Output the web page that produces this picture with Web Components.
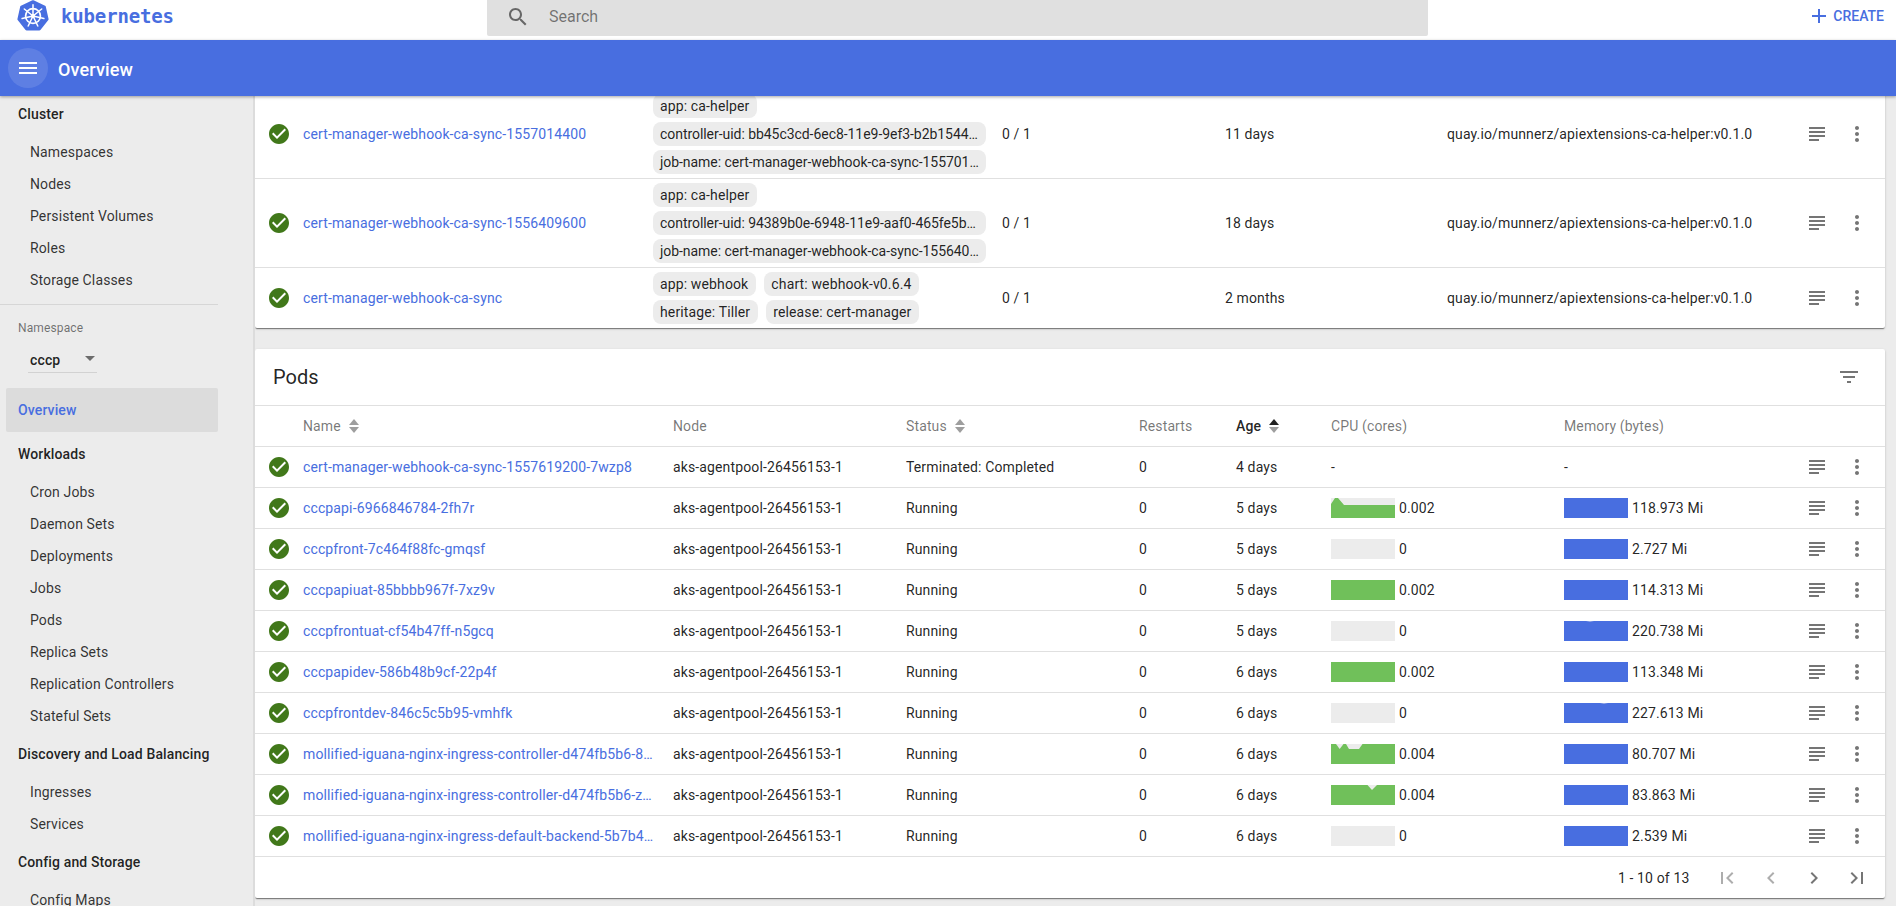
<!DOCTYPE html>
<html lang="en">
<head>
<meta charset="utf-8">
<title>Overview - Kubernetes Dashboard</title>
<style>
html,body{margin:0;padding:0;height:100%;overflow:hidden;background:#ececec;}
body{font-family:Roboto,"Liberation Sans",sans-serif;font-size:14px;letter-spacing:.13px;color:rgba(0,0,0,.87);}
</style>
</head>
<body>
<kd-app>
  <kd-topbar slot="top"></kd-topbar>
  <kd-toolbar slot="bar" title="Overview"></kd-toolbar>
  <kd-sidebar slot="side">
    <kd-nav-head>Cluster</kd-nav-head>
    <kd-nav-item>Namespaces</kd-nav-item>
    <kd-nav-item>Nodes</kd-nav-item>
    <kd-nav-item>Persistent Volumes</kd-nav-item>
    <kd-nav-item>Roles</kd-nav-item>
    <kd-nav-item>Storage Classes</kd-nav-item>
    <kd-namespace value="cccp"></kd-namespace>
    <kd-nav-head active>Overview</kd-nav-head>
    <kd-nav-head>Workloads</kd-nav-head>
    <kd-nav-item>Cron Jobs</kd-nav-item>
    <kd-nav-item>Daemon Sets</kd-nav-item>
    <kd-nav-item>Deployments</kd-nav-item>
    <kd-nav-item>Jobs</kd-nav-item>
    <kd-nav-item>Pods</kd-nav-item>
    <kd-nav-item>Replica Sets</kd-nav-item>
    <kd-nav-item>Replication Controllers</kd-nav-item>
    <kd-nav-item>Stateful Sets</kd-nav-item>
    <kd-nav-head gap>Discovery and Load Balancing</kd-nav-head>
    <kd-nav-item>Ingresses</kd-nav-item>
    <kd-nav-item>Services</kd-nav-item>
    <kd-nav-head gap>Config and Storage</kd-nav-head>
    <kd-nav-item>Config Maps</kd-nav-item>
  </kd-sidebar>
  <kd-main slot="main">
    <kd-card class="jobs">
      <kd-job-row name="cert-manager-webhook-ca-sync-1557014400" pods="0 / 1" age="11 days" image="quay.io/munnerz/apiextensions-ca-helper:v0.1.0"
        labels="app: ca-helper|controller-uid: bb45c3cd-6ec8-11e9-9ef3-b2b1544…|job-name: cert-manager-webhook-ca-sync-155701…"></kd-job-row>
      <kd-job-row name="cert-manager-webhook-ca-sync-1556409600" pods="0 / 1" age="18 days" image="quay.io/munnerz/apiextensions-ca-helper:v0.1.0"
        labels="app: ca-helper|controller-uid: 94389b0e-6948-11e9-aaf0-465fe5b…|job-name: cert-manager-webhook-ca-sync-155640…"></kd-job-row>
      <kd-job-row last name="cert-manager-webhook-ca-sync" pods="0 / 1" age="2 months" image="quay.io/munnerz/apiextensions-ca-helper:v0.1.0"
        labels="app: webhook|chart: webhook-v0.6.4|heritage: Tiller|release: cert-manager"></kd-job-row>
    </kd-card>
    <kd-card class="pods" title="Pods" filter>
      <kd-pod-header></kd-pod-header>
      <kd-pod-row name="cert-manager-webhook-ca-sync-1557619200-7wzp8" status="Terminated: Completed" age="4 days" cpu="-" mem="-"></kd-pod-row>
      <kd-pod-row name="cccpapi-6966846784-2fh7r" status="Running" age="5 days" cpu="0.002" mem="118.973 Mi" spark="peak"></kd-pod-row>
      <kd-pod-row name="cccpfront-7c464f88fc-gmqsf" status="Running" age="5 days" cpu="0" mem="2.727 Mi" spark="none"></kd-pod-row>
      <kd-pod-row name="cccpapiuat-85bbbb967f-7xz9v" status="Running" age="5 days" cpu="0.002" mem="114.313 Mi" spark="full"></kd-pod-row>
      <kd-pod-row name="cccpfrontuat-cf54b47ff-n5gcq" status="Running" age="5 days" cpu="0" mem="220.738 Mi" spark="none" memnotch="26"></kd-pod-row>
      <kd-pod-row name="cccpapidev-586b48b9cf-22p4f" status="Running" age="6 days" cpu="0.002" mem="113.348 Mi" spark="full"></kd-pod-row>
      <kd-pod-row name="cccpfrontdev-846c5c5b95-vmhfk" status="Running" age="6 days" cpu="0" mem="227.613 Mi" spark="none" memnotch="40"></kd-pod-row>
      <kd-pod-row name="mollified-iguana-nginx-ingress-controller-d474fb5b6-8…" status="Running" age="6 days" cpu="0.004" mem="80.707 Mi" spark="notches"></kd-pod-row>
      <kd-pod-row name="mollified-iguana-nginx-ingress-controller-d474fb5b6-z…" status="Running" age="6 days" cpu="0.004" mem="83.863 Mi" spark="notch"></kd-pod-row>
      <kd-pod-row name="mollified-iguana-nginx-ingress-default-backend-5b7b4…" status="Running" age="6 days" cpu="0" mem="2.539 Mi" spark="none"></kd-pod-row>
      <kd-paginator text="1 - 10 of 13"></kd-paginator>
    </kd-card>
  </kd-main>
</kd-app>
<script>
const BLUE='#486ee0';
const ICONS={
  check:'M12 2C6.48 2 2 6.48 2 12s4.48 10 10 10 10-4.48 10-10S17.52 2 12 2zm-2 15l-5-5 1.41-1.41L10 14.17l7.59-7.59L19 8l-9 9z',
  subject:'M14 17H4v2h10v-2zm6-8H4v2h16V9zM4 15h16v-2H4v2zM4 5v2h16V5H4z',
  more:'M12 8c1.1 0 2-.9 2-2s-.9-2-2-2-2 .9-2 2 .9 2 2 2zm0 2c-1.1 0-2 .9-2 2s.9 2 2 2 2-.9 2-2-.9-2-2-2zm0 6c-1.1 0-2 .9-2 2s.9 2 2 2 2-.9 2-2-.9-2-2-2z',
  filter:'M10 18h4v-2h-4v2zM3 6v2h18V6H3zm3 7h12v-2H6v2z',
  search:'M15.5 14h-.79l-.28-.27C15.41 12.59 16 11.11 16 9.5 16 5.91 13.09 3 9.5 3S3 5.91 3 9.5 5.91 16 9.5 16c1.61 0 3.09-.59 4.23-1.57l.27.28v.79l5 4.99L20.49 19l-4.99-5zm-6 0C7.01 14 5 11.99 5 9.5S7.01 5 9.5 5 14 7.01 14 9.5 11.99 14 9.5 14z',
  menu:'M3 18h18v-2H3v2zm0-5h18v-2H3v2zm0-7v2h18V6H3z',
  plus:'M19 13h-6v6h-2v-6H5v-2h6V5h2v6h6v2z',
  first:'M18.41 16.59L13.82 12l4.59-4.59L17 6l-6 6 6 6zM6 6h2v12H6z',
  prev:'M15.41 16.59L10.83 12l4.58-4.59L14 6l-6 6 6 6z',
  next:'M8.59 16.59L13.17 12 8.59 7.41 10 6l6 6-6 6z',
  last:'M5.59 7.41L10.18 12l-4.59 4.59L7 18l6-6-6-6zM16 6h2v12h-2z'
};
function define(name,css,html){
  class C extends HTMLElement{
    connectedCallback(){
      if(this.shadowRoot)return;
      const r=this.attachShadow({mode:'open'});
      r.innerHTML='<style>'+css+'</style>'+(typeof html==='function'?html(this):html);
    }
  }
  customElements.define(name,C);
}
const esc=s=>String(s).replace(/&/g,'&amp;').replace(/</g,'&lt;');

define('kd-icon',
  ':host{display:inline-flex;width:24px;height:24px;flex:none;color:inherit}svg{width:24px;height:24px;display:block;fill:currentColor}',
  h=>`<svg viewBox="0 0 24 24" aria-hidden="true"><path d="${ICONS[h.getAttribute('name')]}"/></svg>`);

define('kd-app',
  `:host{display:grid;grid-template-columns:255px 1fr;grid-template-rows:40px 56px 810px;height:906px;width:1896px;overflow:hidden;background:#ececec}
   ::slotted([slot=top]){grid-column:1/3}::slotted([slot=bar]){grid-column:1/3;position:relative;z-index:3}`,
  `<slot name="top"></slot><slot name="bar"></slot><slot name="side"></slot><slot name="main"></slot>`);

define('kd-topbar',
  `:host{display:flex;align-items:flex-start;height:40px;background:#fff;position:relative}
   .logo{display:flex;align-items:center;width:487px;height:32px;padding-left:17px;box-sizing:border-box;gap:12px}
   .logo svg{width:32px;height:32px;display:block}
   .word{font:700 19px "DejaVu Sans Mono",monospace;color:${BLUE};letter-spacing:-.15px}
   .search{width:941px;height:36px;background:#e0e0e0;border-radius:0 0 2px 2px;display:flex;align-items:center;color:rgba(0,0,0,.54);font-size:16px;padding-left:19px;box-sizing:border-box}
   .search kd-icon{margin-top:-3px}
   .search span{margin:-3px 0 0 19px;color:rgba(0,0,0,.5);letter-spacing:0}
   .create{margin-left:auto;display:flex;align-items:center;height:32px;color:${BLUE};font-weight:500;font-size:14px;padding-right:12px;letter-spacing:0}
   .create span{margin-left:2px}`,
  `<div class="logo"><svg viewBox="0 0 32 32" aria-hidden="true">
      <polygon points="16,1.5 27.5,6.9 30.3,19.2 22.4,29.2 9.6,29.2 1.7,19.2 4.5,6.9" fill="${BLUE}" stroke="${BLUE}" stroke-width="2.6" stroke-linejoin="round"/>
      <circle cx="16" cy="16" r="7.4" fill="none" stroke="#fff" stroke-width="1.7"/>
      <path d="M16 16V4.8M16 16L24.7 9M16 16L26.9 18.5M16 16L20.8 26M16 16L11.2 26M16 16L5.1 18.5M16 16L7.3 9" stroke="#fff" stroke-width="1.5" stroke-linecap="round"/>
      <circle cx="16" cy="16" r="2" fill="#fff"/></svg>
      <span class="word">kubernetes</span></div>
   <div class="search"><kd-icon name="search"></kd-icon><span>Search</span></div>
   <div class="create"><kd-icon name="plus"></kd-icon><span>CREATE</span></div>`);

define('kd-toolbar',
  `:host{display:flex;align-items:center;height:56px;background:${BLUE};color:#fff;box-shadow:0 1px 3px rgba(0,0,0,.35);padding-left:8px;box-sizing:border-box}
   .m{width:40px;height:40px;border-radius:50%;background:rgba(255,255,255,.12);display:flex;align-items:center;justify-content:center}
   .t{margin:2px 0 0 10px;font-size:18px;font-weight:500}`,
  h=>`<div class="m"><kd-icon name="menu"></kd-icon></div><div class="t">${esc(h.getAttribute('title'))}</div>`);

define('kd-sidebar',
  `:host{display:flex;flex-direction:column;width:255px;height:810px;overflow:hidden;background:#ececec;box-sizing:border-box;border-right:2px solid #dcdcdc}`,
  `<slot></slot>`);

define('kd-nav-head',
  `:host{display:flex;flex:none;align-items:center;height:36px;margin:0 36px 4px 0;padding-left:18px;font-weight:500;font-size:14px;width:200px;white-space:nowrap}
   :host([gap]){margin-top:4px}
   :host([active]){height:44px;margin:0 35px 4px 6px;padding-left:12px;width:200px;background:#dcdcdc;border-radius:2px;color:${BLUE}}`,
  `<slot></slot>`);

define('kd-nav-item',
  `:host{display:flex;flex:none;align-items:center;height:32px;padding-left:30px;font-size:14px;white-space:nowrap;color:rgba(0,0,0,.8)}`,
  `<slot></slot>`);

define('kd-namespace',
  `:host{display:block;flex:none;height:84px;margin-top:8px;width:218px;border-top:1px solid #d6d6d6;box-sizing:border-box}
   .l{font-size:12px;color:rgba(0,0,0,.54);margin:16px 0 0 18px;line-height:14px}
   .s{width:69px;margin:12px 0 0 28px;height:26px;border-bottom:1px solid #d2d2d2;display:flex;align-items:center;justify-content:space-between;padding:0 2px;box-sizing:border-box;font-weight:500;font-size:14px}
   .a{width:0;height:0;border:5px solid transparent;border-top-color:rgba(0,0,0,.54);border-bottom:0;margin-top:-3px}`,
  h=>`<div class="l">Namespace</div><div class="s"><span>${esc(h.getAttribute('value'))}</span><span class="a"></span></div>`);

define('kd-main',
  `:host{display:flex;flex-direction:column;gap:21px;height:810px;overflow:hidden;padding-right:11px;box-sizing:border-box}
   ::slotted(.jobs){margin-top:-6px}`,
  `<slot></slot>`);

define('kd-card',
  `:host{display:block;flex:none;background:#fff;border-radius:2px;box-shadow:0 2px 1px -1px rgba(0,0,0,.3),0 1px 1px 0 rgba(0,0,0,.2),0 1px 3px 0 rgba(0,0,0,.14)}
   .h{display:flex;align-items:center;justify-content:space-between;height:56px;padding:0 24px 0 18px;border-bottom:1px solid #e0e0e0;font-size:20px;letter-spacing:0}
   kd-icon{color:rgba(0,0,0,.54)}`,
  h=>(h.getAttribute('title')?`<div class="h"><span>${esc(h.getAttribute('title'))}</span>${h.hasAttribute('filter')?'<kd-icon name="filter"></kd-icon>':''}</div>`:'')+`<slot></slot>`);

define('kd-chip',
  `:host{display:inline-block;height:24px;line-height:24px;padding:0 8px 0 7px;box-sizing:border-box;background:#ececec;border-radius:8px;font-size:14px;white-space:nowrap;color:rgba(0,0,0,.87)}
   :host([long]){width:333px;letter-spacing:-.05px;overflow:hidden}`,
  `<slot></slot>`);

const rowActions=`<span class="a"><kd-icon name="subject"></kd-icon></span><span class="a"><kd-icon name="more"></kd-icon></span>`;
const rowBase=`:host{display:grid;align-items:center;box-sizing:border-box;font-size:14px;border-bottom:1px solid #e0e0e0;white-space:nowrap}
  .st{display:flex;justify-content:flex-start;padding-left:12px;color:#41781a}
  .lnk{color:${BLUE}}
  .a{display:flex;justify-content:center;color:rgba(0,0,0,.54)}`;

define('kd-job-row',
  rowBase+`:host{grid-template-columns:48px 350px 349px 223px 222px 350px 40px 40px 8px;padding:4px 0}
   :host([last]){border-bottom:0}
   .c{display:flex;flex-wrap:wrap;gap:4px 8px;width:340px}`,
  h=>`<span class="st"><kd-icon name="check"></kd-icon></span><span class="lnk">${esc(h.getAttribute('name'))}</span>
   <span class="c">${h.getAttribute('labels').split('|').map(l=>`<kd-chip${l.endsWith('…')?' long':''}>${esc(l)}</kd-chip>`).join('')}</span>
   <span>${esc(h.getAttribute('pods'))}</span><span>${esc(h.getAttribute('age'))}</span><span>${esc(h.getAttribute('image'))}</span>${rowActions}<span></span>`);

const podCols='grid-template-columns:48px 370px 233px 233px 97px 95px 233px 233px 40px 40px 8px;';

define('kd-sort',
  `:host{display:inline-block;width:10px;height:14px;margin-left:8px;vertical-align:-2px}svg{display:block;width:10px;height:14px}`,
  h=>`<svg viewBox="0 0 10 14" aria-hidden="true"><polygon points="5,0 10,6 0,6" fill="${h.hasAttribute('up')?'rgba(0,0,0,.87)':'rgba(0,0,0,.38)'}"/><polygon points="0,8 10,8 5,14" fill="rgba(0,0,0,.38)"/></svg>`);

define('kd-pod-header',
  rowBase+`:host{${podCols}height:41px;color:rgba(0,0,0,.54)}
   .on{color:rgba(0,0,0,.87);font-weight:500}`,
  `<span></span><span>Name<kd-sort></kd-sort></span><span>Node</span><span>Status<kd-sort></kd-sort></span><span>Restarts</span><span class="on">Age<kd-sort up></kd-sort></span><span>CPU (cores)</span><span>Memory (bytes)</span><span></span><span></span><span></span>`);

const SPARK={
  none:'',
  full:'<rect width="64" height="20" fill="#70c05a"/>',
  peak:'<polygon points="0,20 0,6 4,0 7,0 13,7 64,7 64,20" fill="#70c05a"/>',
  notches:'<rect width="64" height="20" fill="#70c05a"/><polygon points="5,0 8.7,5 12.5,0" fill="#ececec"/><polygon points="15,0 18,5 28,5 31.5,0" fill="#ececec"/>',
  notch:'<rect width="64" height="20" fill="#70c05a"/><polygon points="36.5,0 41,5 46,0" fill="#ececec"/>'
};
define('kd-spark',
  `:host{display:inline-block;width:64px;height:20px;flex:none;background:#ececec}svg{display:block;width:64px;height:20px}`,
  h=>{
    const k=h.getAttribute('kind'),n=h.getAttribute('notch');
    const inner=k==='mem'?`<rect width="64" height="20" fill="${BLUE}"/>`+(n?`<polygon points="${+n-4},0 ${n},.4 ${+n+4},0" fill="#ececec"/>`:''):SPARK[k];
    return `<svg viewBox="0 0 64 20" aria-hidden="true">${inner}</svg>`;
  });

define('kd-pod-row',
  rowBase+`:host{${podCols}height:41px}
   .m{display:flex;align-items:center;gap:4px}`,
  h=>{
    const g=a=>esc(h.getAttribute(a));
    const sp=h.getAttribute('spark');
    const cpu=sp?`<span class="m"><kd-spark kind="${sp}"></kd-spark><span>${g('cpu')}</span></span>`:`<span>${g('cpu')}</span>`;
    const mem=sp?`<span class="m"><kd-spark kind="mem" ${h.getAttribute('memnotch')?`notch="${h.getAttribute('memnotch')}"`:''}></kd-spark><span>${g('mem')}</span></span>`:`<span>${g('mem')}</span>`;
    return `<span class="st"><kd-icon name="check"></kd-icon></span><span class="lnk">${g('name')}</span><span>aks-agentpool-26456153-1</span><span>${g('status')}</span><span>0</span><span>${g('age')}</span>${cpu}${mem}${rowActions}<span></span>`;
  });

define('kd-paginator',
  `:host{display:flex;align-items:center;justify-content:flex-end;height:41px;padding-right:6px;font-size:14px}
   .t{margin-right:16px}
   .b{width:43.4px;display:flex;justify-content:center;color:rgba(0,0,0,.54)}
   .d{color:rgba(0,0,0,.32)}`,
  h=>`<span class="t">${esc(h.getAttribute('text'))}</span><span class="b d"><kd-icon name="first"></kd-icon></span><span class="b d"><kd-icon name="prev"></kd-icon></span><span class="b"><kd-icon name="next"></kd-icon></span><span class="b"><kd-icon name="last"></kd-icon></span>`);
</script>
</body>
</html>
